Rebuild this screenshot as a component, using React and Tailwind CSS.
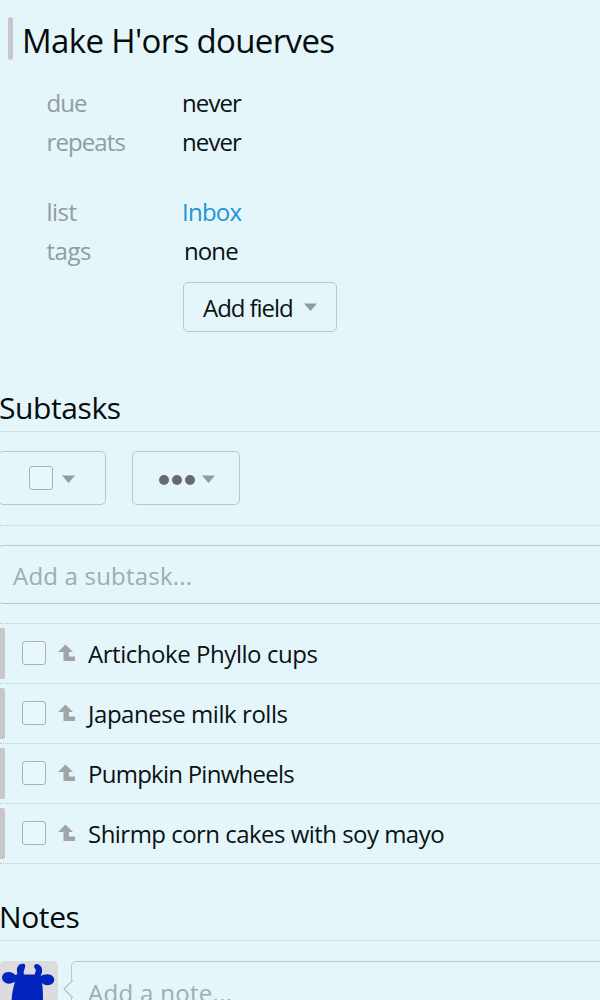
import { clsx } from 'clsx';

const fields = [
  { label: 'due', labelTracking: 'tracking-[-0.9px]', value: 'never', tracking: 'tracking-[-0.9px]' },
  { label: 'repeats', labelTracking: 'tracking-[-0.9px]', value: 'never', tracking: 'tracking-[-0.9px]' },
  { label: 'list', labelTracking: 'tracking-[-0.5px]', value: 'Inbox', tracking: 'tracking-[-0.75px]', link: true, gap: true },
  { label: 'tags', labelTracking: 'tracking-[-0.5px]', value: 'none', tracking: 'tracking-[-0.9px]', indent: true },
];

const subtasks = [
  { title: 'Artichoke Phyllo cups', tracking: 'tracking-[-0.45px]' },
  { title: 'Japanese milk rolls', tracking: 'tracking-[-0.45px]' },
  { title: 'Pumpkin Pinwheels', tracking: 'tracking-[-0.75px]' },
  { title: 'Shirmp corn cakes with soy mayo', tracking: 'tracking-[-0.53px]' },
];

const Caret = ({ className }) => (
  <svg viewBox="0 0 13 8" className={clsx('h-2 w-[13px] shrink-0', className)}>
    <path d="M0 0.5h13L6.5 8z" fill="#929c9e" />
  </svg>
);

const Checkbox = () => (
  <span className="block size-6 shrink-0 rounded-[3px] border-[1.5px] border-[#abb2b4] bg-[#e7f7fb]" />
);

const ParentArrow = () => (
  <svg viewBox="0 0 18 18" className="size-[18px] shrink-0">
    <path d="M7.5 0.500L15 8h-4v4.500h6V17H5.500V8H0z" fill="#a1a5a6" />
  </svg>
);

const Cow = () => (
  <svg viewBox="0 0 58 58" className="size-[58px]">
    <path
      d="M24.500 3C18.500 1.500 15.500 7 17.500 13L15.500 14C12 10.500 6 10 3 13.500C0.500 17 3 21.500 7 22.500C10 23 13 22 15 21C13 27 11.500 34 11.500 42C14 52 20 57 27 57C35 57 41 51 43 42C43 34 43 28 42 22C45 25 50 25 53 22C56 18 53 14 49 13.500C46 13 43 14 40.500 15C43.500 10 42.500 4 36.500 3C33.500 3.500 33.500 6.500 35.500 8C36 10 35.500 12 34.500 13.500H24C23 10.500 24.500 9 25 6.500C25.500 5 25 3.500 24.500 3z"
      fill="#0323bd"
    />
  </svg>
);

const SectionTitle = ({ children, className }) => (
  <h2 className={clsx('h-[46px] border-b border-dotted border-[#b9cfd3] text-[30px] leading-[44px] tracking-[-0.4px] text-[#060b0c]', className)}>
    {children}
  </h2>
);

const App = () => (
  <div
    className="h-[1000px] w-[600px] overflow-hidden bg-[#e4f6fa] text-[24px] text-[#0b1213]"
    style={{ fontFamily: '"Segoe UI", "Open Sans", "Noto Sans", sans-serif' }}
  >
    <header className="flex items-start pt-[17px] pl-2">
      <span className="h-[43px] w-[5px] rounded-sm bg-[#c8c8c8]" />
      <h1 className="ml-[9px] text-[33px] leading-[48px] tracking-[-0.65px] whitespace-nowrap text-[#060b0c]">
        Make H'ors douerves
      </h1>
    </header>

    <dl className="mt-[18px] pl-[46.5px]">
      {fields.map(({ label, labelTracking, value, link, gap, indent, tracking }) => (
        <div key={label} className={clsx('flex h-[39.5px] items-center', gap && 'mt-[30px]')}>
          <dt className={clsx('w-[135.5px] text-[#929c9e]', labelTracking)}>{label}</dt>
          <dd className={clsx(tracking, link && 'text-[#1f94d2]', indent && 'pl-0.5')}>{value}</dd>
        </div>
      ))}
    </dl>

    <button className="mt-[11px] ml-[183px] flex h-[50px] w-[154px] items-center rounded-[5px] border-[1.5px] border-[#b5c9cd] pl-[19px]">
      <span className="mt-0.5 tracking-[-1.05px]">Add field</span>
      <Caret className="ml-[11px]" />
    </button>

    <SectionTitle className="mt-[54px] -ml-px">Subtasks</SectionTitle>

    <div className="flex h-[94px] gap-[26px] border-b border-dotted border-[#b9cfd3] pt-[19px]">
      <button className="-ml-0.5 flex h-[54px] w-[108px] items-center rounded-[5px] border-[1.5px] border-[#b5c9cd] pl-[30px]">
        <Checkbox />
        <Caret className="mt-px ml-[9px]" />
      </button>
      <button className="flex h-[54px] w-[108px] items-center rounded-[5px] border-[1.5px] border-[#b5c9cd] pl-[26px]">
        <span className="mt-1 flex gap-[3px]">
          <span className="size-[10px] rounded-full bg-[#656b6d]" />
          <span className="size-[10px] rounded-full bg-[#656b6d]" />
          <span className="size-[10px] rounded-full bg-[#656b6d]" />
        </span>
        <Caret className="mt-0.5 ml-[7px]" />
      </button>
    </div>

    <div className="mt-[19px] -mr-3 -ml-0.5 flex h-[59px] items-center rounded-[5px] border-[1.5px] border-[#b5c9cd] pl-[14px] tracking-[0.2px] text-[#a0acae]">
      <span className="mt-0.5">Add a subtask...</span>
    </div>

    <ul className="mt-[19px] border-t border-dotted border-[#b9cfd3]">
      {subtasks.map(({ title, tracking }) => (
        <li key={title} className="flex h-[60px] items-center border-b border-dotted border-[#b9cfd3]">
          <span className="h-[51px] w-[5px] rounded-r-[2px] bg-[#c8c8c8]" />
          <span className="mb-0.5 ml-[17px]">
            <Checkbox />
          </span>
          <span className="mb-0.5 ml-3">
            <ParentArrow />
          </span>
          <span className={clsx('ml-[12px] whitespace-nowrap', tracking)}>{title}</span>
        </li>
      ))}
    </ul>

    <SectionTitle className="mt-[31px] -ml-px">Notes</SectionTitle>

    <div className="mt-5 flex">
      <div className="size-[58px] overflow-hidden rounded-[5px] bg-[#dcdcde]">
        <Cow />
      </div>
      <div className="relative -mr-12 ml-[13px] h-[80px] flex-1 rounded-[5px] border-[1.5px] border-[#b5c9cd] pt-[13px] pl-4 text-[#a0acae]">
        <svg viewBox="0 0 10 18" className="absolute top-[18px] -left-[9px] h-[18px] w-[10px]">
          <path d="M10 0L1 9l9 9" fill="#e4f6fa" stroke="#b5c9cd" strokeWidth="1.5" />
        </svg>
        <span className="tracking-[0.3px]">Add a note...</span>
      </div>
    </div>
  </div>
);

export default App;
